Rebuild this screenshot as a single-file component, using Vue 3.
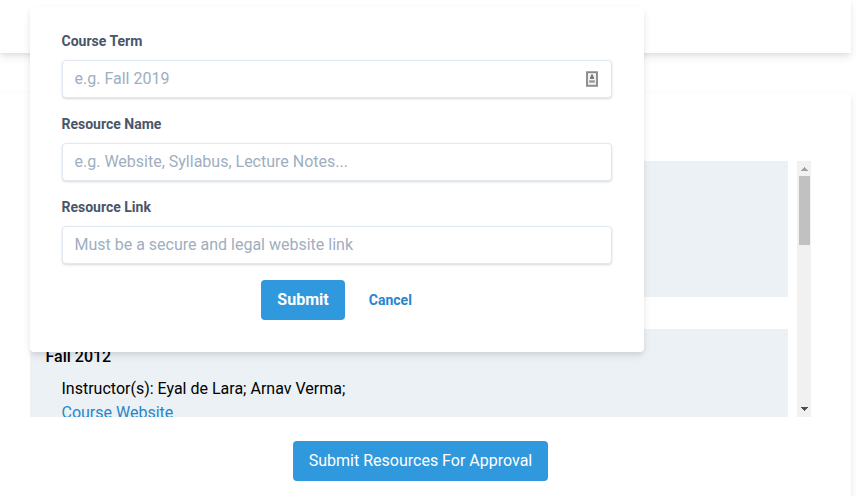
<script setup>
const fields = [
  { label: 'Course Term', hint: 'e.g. Fall 2019', autofill: true },
  { label: 'Resource Name', hint: 'e.g. Website, Syllabus, Lecture Notes...' },
  { label: 'Resource Link', hint: 'Must be a secure and legal website link' },
]
</script>

<template>
  <div class="page">
    <header class="top-card"></header>
    <main class="card">
      <div class="scroller">
        <div class="list">
          <section class="offering first"></section>
          <section class="offering">
            <h3>Fall 2012</h3>
            <div class="detail">
              <p>Instructor(s): Eyal de Lara; Arnav Verma;</p>
              <a>Course Website</a>
            </div>
          </section>
        </div>
        <div class="track">
          <svg width="14" height="15" viewBox="0 0 14 15" shape-rendering="crispEdges"><path d="M7 6h1v1h1v1h1v1h1v1H4V9h1V8h1V7h1z" fill="#a3a3a3" /></svg>
          <div class="thumb"></div>
          <svg class="down" width="14" height="15" viewBox="0 0 14 15" shape-rendering="crispEdges"><path d="M4 5h7v1h-1v1H9v1H8v1H7V8H6V7H5V6H4z" fill="#505050" /></svg>
        </div>
      </div>
      <button class="btn approve">Submit Resources For Approval</button>
    </main>

    <form class="modal" @submit.prevent>
      <div v-for="f in fields" :key="f.label" class="field">
        <label>{{ f.label }}</label>
        <div class="control">
          <input type="text" :placeholder="f.hint" />
          <svg v-if="f.autofill" class="autofill" width="12" height="16" viewBox="0 0 12 16">
            <rect x="1" y="1.2" width="10" height="13.600" fill="#f2f2f2" stroke="#8b8b8b" stroke-width="1.9" />
            <path d="M5 3.500h2v2h1v2.500H4V5.500h1z" fill="#7c7c7c" />
            <path d="M3 9h6v3H3z" fill="#b4b4b4" />
            <path d="M4 10h4v1H4z" fill="#989898" />
          </svg>
        </div>
      </div>
      <div class="actions">
        <button class="btn submit">Submit</button>
        <a class="cancel">Cancel</a>
      </div>
    </form>
  </div>
</template>

<style>
body {
  background: #fff;
  overflow: hidden;
}
</style>

<style scoped>
* {
  box-sizing: border-box;
  margin: 0;
}
.page {
  position: relative;
  height: 496px;
  overflow: hidden;
  font-family: Roboto, sans-serif;
  font-size: 16px;
  line-height: 24px;
  color: #000;
}
.top-card,
.card,
.modal {
  background: #fff;
  box-shadow: 0 4px 10px 0 rgba(0, 0, 0, 0.07), 0 3px 5px -1px rgba(0, 0, 0, 0.08);
}
.top-card,
.card {
  width: 851px;
}
.top-card {
  height: 53px;
}
.card {
  display: flex;
  flex-direction: column;
  margin-top: 40px;
  height: 440px;
  padding: 68px 40px 0 30px;
}
.scroller {
  display: flex;
  justify-content: space-between;
  height: 256px;
  overflow: hidden;
}
.list {
  width: 758px;
}
.offering {
  height: 168px;
  padding: 16px 15.5px;
  background: #ebf1f5;
}
.offering.first {
  height: 136px;
  margin-bottom: 32px;
}
h3 {
  font-size: 16px;
  font-weight: 500;
}
.detail {
  padding: 8px 16px;
}
.detail a {
  color: #2886cb;
}
.track {
  display: flex;
  flex-direction: column;
  width: 14px;
  background: #f1f1f1;
}
.thumb {
  width: 11px;
  height: 69px;
  margin-left: 2px;
  background: #c1c1c1;
}
.down {
  margin-top: auto;
}
.btn {
  height: 40px;
  padding: 0 16px;
  border: 0;
  border-radius: 4px;
  background: #3099dd;
  color: #fff;
  font: 16px/24px Roboto, sans-serif;
}
.approve {
  width: 255px;
  margin: 24px 0 0 263px;
  padding: 0;
}
.modal {
  position: absolute;
  top: 7px;
  left: 30px;
  width: 614px;
  height: 345px;
  padding: 24px 32px 32px 31.5px;
  border-radius: 4px;
}
.field {
  margin-bottom: 16px;
}
label {
  display: block;
  margin-bottom: 8px;
  font-size: 14px;
  line-height: 21px;
  font-weight: 700;
  color: #4a5568;
}
.control {
  position: relative;
  height: 38px;
}
input {
  display: block;
  width: 550.5px;
  height: 38px;
  padding: 0 12px 2px;
  border: 1px solid #e2e8f0;
  border-radius: 4px;
  background: #fff;
  box-shadow: 0 1px 3px 0 rgba(0, 0, 0, 0.1), 0 1px 2px 0 rgba(0, 0, 0, 0.06);
  font: 16px/20px Roboto, sans-serif;
}
input::placeholder {
  color: #a0aec0;
  opacity: 1;
}
.autofill {
  position: absolute;
  top: 11px;
  right: 14px;
}
.actions {
  display: flex;
  align-items: center;
  padding-left: 199.5px;
}
.submit {
  width: 84px;
  font-weight: 700;
}
.cancel {
  margin-left: 23.8px;
  font-size: 14px;
  font-weight: 700;
  color: #2886cb;
}
</style>
